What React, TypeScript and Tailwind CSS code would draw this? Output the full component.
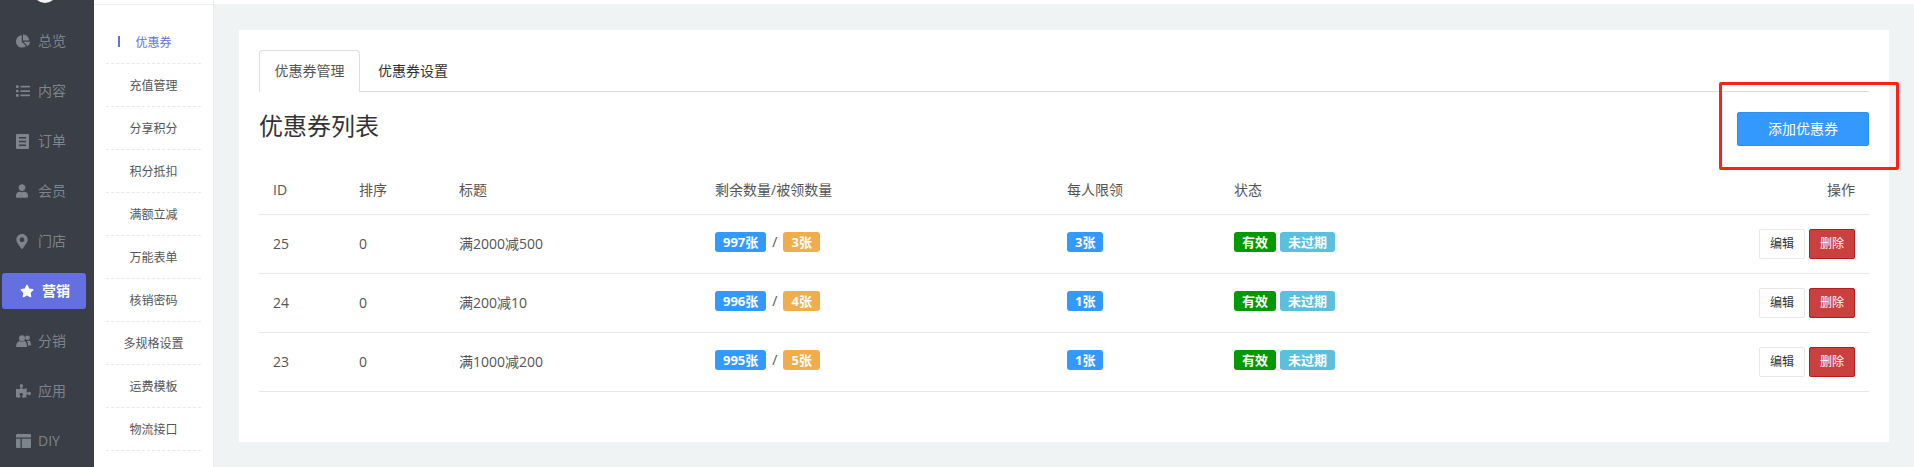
import type { ComponentType } from 'react';
import { FaChartPie, FaList, FaUser, FaMapMarkerAlt, FaStar, FaPuzzlePiece } from 'react-icons/fa';

function OrderIcon({ className }: { className?: string }) {
  return (
    <svg viewBox="0 0 13 15" className={className} fill="currentColor" fillRule="evenodd">
      <path d="M1 0h11a1 1 0 0 1 1 1v13a1 1 0 0 1-1 1H1a1 1 0 0 1-1-1V1a1 1 0 0 1 1-1z M3 3v1.500h7V3z M3 6.700v1.500h7V6.700z M3 10.500V12h7v-1.500z" />
    </svg>
  );
}

function UsersIcon({ className }: { className?: string }) {
  return (
    <svg viewBox="0 0 15 12" className={className} fill="currentColor">
      <circle cx="6" cy="3.200" r="3" />
      <path d="M0 12c0-3.500 1.500-5.500 3.500-6C4.500 6.800 7.500 6.800 8.500 6 10 6.500 11 8.500 11 12z" />
      <circle cx="11.500" cy="2.800" r="2.300" />
      <path d="M12 10.500h3c0-3-.8-4.500-2-5-.7.500-1.500.6-2.300.4.300.3.600.6.800 1 .3 1 .5 2.200.5 3.600z" />
    </svg>
  );
}

function DiyIcon({ className }: { className?: string }) {
  return (
    <svg viewBox="0 0 15 14" className={className} fill="currentColor">
      <path d="M1 0h13a1 1 0 0 1 1 1v2.500H0V1a1 1 0 0 1 1-1z" />
      <path d="M0 4.800h4.500V14H1a1 1 0 0 1-1-1z" />
      <path d="M5.800 4.800H15V13a1 1 0 0 1-1 1H5.800z" />
    </svg>
  );
}

const menu: { label: string; icon: ComponentType<{ className?: string }>; size: string; active?: boolean }[] = [
  { label: '总览', icon: FaChartPie, size: 'h-[14px] w-[14px] mr-[8px]' },
  { label: '内容', icon: FaList, size: 'h-[14px] w-[14px] mr-[8px]' },
  { label: '订单', icon: OrderIcon, size: 'h-[15px] w-[13px] mr-[9px]' },
  { label: '会员', icon: FaUser, size: 'h-[14px] w-[12px] mr-[10px]' },
  { label: '门店', icon: FaMapMarkerAlt, size: 'h-[15px] w-[12px] mr-[10px]' },
  { label: '营销', icon: FaStar, size: 'h-[14px] w-[14px] mr-[8px]', active: true },
  { label: '分销', icon: UsersIcon, size: 'h-[12px] w-[15px] mr-[7px]' },
  { label: '应用', icon: FaPuzzlePiece, size: 'h-[14px] w-[15px] mr-[7px]' },
  { label: 'DIY', icon: DiyIcon, size: 'h-[14px] w-[15px] mr-[7px]' },
];

const subMenu = ['优惠券', '充值管理', '分享积分', '积分抵扣', '满额立减', '万能表单', '核销密码', '多规格设置', '运费模板', '物流接口'];

const coupons = [
  { id: 25, title: '满2000减500', left: '997张', used: '3张', limit: '3张' },
  { id: 24, title: '满200减10', left: '996张', used: '4张', limit: '1张' },
  { id: 23, title: '满1000减200', left: '995张', used: '5张', limit: '1张' },
];

const cols = 'grid grid-cols-[86px_100px_256px_352px_167px_1fr] items-center pl-[14px] pr-[14px]';

function Label({ color, children }: { color: string; children: string }) {
  return <span className={`inline-flex h-5 items-center rounded-[3px] px-[8px] text-[13px] font-bold text-white ${color}`}>{children}</span>;
}

export default function App() {
  return (
    <div className="flex h-[467px] w-[1914px] overflow-hidden bg-[#f0f3f4] text-sm text-[#555555] [font-family:'Open_Sans','Noto_Sans_CJK_SC',sans-serif]">
      <aside className="relative flex w-[94px] shrink-0 flex-col bg-[#3a3e46] px-[2px] pt-[23px]">
        <div className="absolute left-[33px] top-[-21px] h-[24px] w-[24px] rounded-full bg-[#f4f4f4]" />
        {menu.map(({ label, icon: Icon, size, active }) => (
          <div
            key={label}
            className={`mb-[14px] flex h-[36px] w-[84px] shrink-0 items-center rounded-[3px] ${active ? 'bg-[#6470e0] pl-[18px] font-bold text-white' : 'pl-[14px] text-[#7d848c]'}`}
          >
            <Icon className={`shrink-0 ${size}`} />
            <span>{label}</span>
          </div>
        ))}
      </aside>

      <nav className="flex w-[120px] shrink-0 flex-col border-r border-[#e8ecee] bg-white">
        <div className="h-[5px] border-b border-[#eeeeee]" />
        <div className="mx-[12px] mt-[16px] flex flex-col">
          {subMenu.map((item, i) => (
            <div
              key={item}
              className={`relative flex h-[43px] shrink-0 items-center justify-center border-b border-dashed border-[#e8e8e8] pt-[2px] text-xs ${i === 0 ? 'text-[#6470e0]' : ''}`}
            >
              {i === 0 && <span className="absolute left-[12px] top-[15px] h-[11px] w-[2px] bg-[#6470e0]" />}
              {item}
            </div>
          ))}
        </div>
      </nav>

      <main className="flex flex-1 flex-col">
        <div className="h-[4px] bg-white" />
        <div className="mx-[25px] mt-[26px] h-[412px] bg-white px-[20px] pt-[20px]">
          <div className="flex h-[42px] items-end border-b border-[#dddddd]">
            <div className="-mb-px flex h-[42px] w-[101px] items-center justify-center rounded-t-[4px] border border-[#dddddd] border-b-white bg-white">优惠券管理</div>
            <div className="flex h-[41px] w-[106px] items-center justify-center text-[#333333]">优惠券设置</div>
          </div>

          <div className="relative flex h-[74px] items-start justify-between">
            <h1 className="mt-[17px] text-2xl leading-[34px] text-[#333333]">优惠券列表</h1>
            <button className="mt-[20px] h-[34px] w-[132px] rounded-[2px] border border-[#2e8fee] bg-[#3399ff] text-white">添加优惠券</button>
            <div className="absolute right-[-30px] top-[-10px] h-[88px] w-[180px] rounded-[2px] border-[3px] border-[#ff2018]" />
          </div>

          <div className={`${cols} h-[49px] border-b border-[#e7e7e7]`}>
            <span>ID</span>
            <span>排序</span>
            <span>标题</span>
            <span>剩余数量/被领数量</span>
            <span>每人限领</span>
            <div className="flex justify-between">
              <span>状态</span>
              <span>操作</span>
            </div>
          </div>

          {coupons.map((c) => (
            <div key={c.id} className={`${cols} h-[59px] border-b border-[#e7e7e7]`}>
              <span>{c.id}</span>
              <span>0</span>
              <span>{c.title}</span>
              <div className="-mt-[4px] flex items-center gap-[6px]">
                <Label color="bg-[#3399ff]">{c.left}</Label>
                <span>/</span>
                <Label color="bg-[#f0ad4e]">{c.used}</Label>
              </div>
              <div className="-mt-[4px] flex">
                <Label color="bg-[#3399ff]">{c.limit}</Label>
              </div>
              <div className="flex items-center justify-between">
                <div className="-mt-[4px] flex gap-[4px]">
                  <Label color="bg-[#009900]">有效</Label>
                  <Label color="bg-[#5bc0de]">未过期</Label>
                </div>
                <div className="flex gap-[4px] text-xs">
                  <button className="h-[30px] w-[46px] rounded-[2px] border border-[#e8e8e8] bg-white text-[#333333]">编辑</button>
                  <button className="h-[30px] w-[46px] rounded-[2px] border border-[#b71c1c] bg-[#c9403f] text-white">删除</button>
                </div>
              </div>
            </div>
          ))}
        </div>
      </main>
    </div>
  );
}
